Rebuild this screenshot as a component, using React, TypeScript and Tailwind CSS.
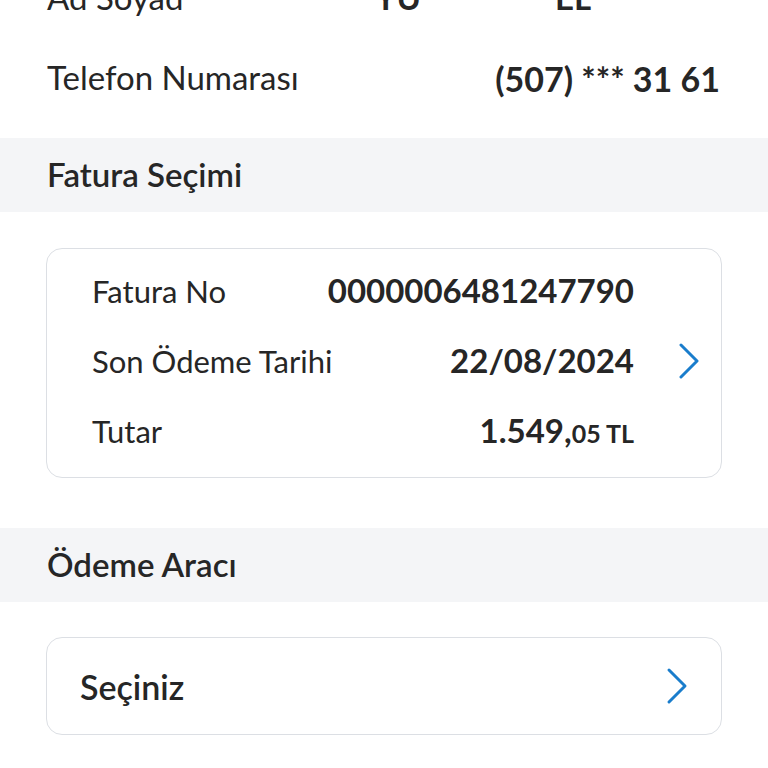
const font = { fontFamily: 'Lato, "Open Sans", sans-serif' }

function Chevron({ className }: { className?: string }) {
  return (
    <svg viewBox="0 0 22 36" className={className} fill="none">
      <path d="M3 2 L19 18 L3 34" stroke="#1a7dcc" strokeWidth="3" strokeLinecap="round" strokeLinejoin="round" />
    </svg>
  )
}

function InfoRow({ label, value }: { label: string; value: React.ReactNode }) {
  return (
    <div className="h-[70px] flex items-center justify-between">
      <span className="text-[33px] text-[#262626]">{label}</span>
      <span className="text-[34px] font-bold text-[#262626]">{value}</span>
    </div>
  )
}

function InvoiceRow({ label, value }: { label: string; value: React.ReactNode }) {
  return (
    <div className="h-[70px] flex items-center justify-between">
      <span className="text-[31px] text-[#262626]">{label}</span>
      <span className="text-[33px] font-bold text-[#262626]">{value}</span>
    </div>
  )
}

function SectionTitle({ children }: { children: React.ReactNode }) {
  return (
    <div className="h-[74px] bg-[#f4f5f7] flex items-center px-[47px]">
      <h2 className="text-[33px] font-semibold text-[#262626]">{children}</h2>
    </div>
  )
}

export default function App() {
  return (
    <div className="w-[768px] h-[768px] overflow-hidden bg-white" style={font}>
      {/* Customer info (list scrolled, first row partly hidden) */}
      <div className="-mt-[27px] pl-[47px] pr-[48px] pb-[25px]">
        <div className="h-[70px] pb-[20px] flex items-center">
          <span className="text-[33px] text-[#262626] w-[328px]">Ad Soyad</span>
          <span className="text-[33px] font-bold text-[#262626] w-[180px]">YU</span>
          <span className="text-[33px] font-bold text-[#262626]">EL</span>
        </div>
        <InfoRow label="Telefon Numarası" value="(507) *** 31 61" />
      </div>

      <SectionTitle>Fatura Seçimi</SectionTitle>

      <div className="px-[46px] pt-[36px] pb-[50px]">
        <div className="flex items-center border border-[#dcdfe4] rounded-[16px] pl-[45px] pt-[7px] pb-[11px]">
          <div className="flex-1">
            <InvoiceRow label="Fatura No" value="0000006481247790" />
            <InvoiceRow label="Son Ödeme Tarihi" value="22/08/2024" />
            <InvoiceRow
              label="Tutar"
              value={
                <>
                  1.549,<span className="text-[25px]">05 TL</span>
                </>
              }
            />
          </div>
          <Chevron className="ml-[44px] mr-[21px] w-[22px] h-[36px]" />
        </div>
      </div>

      <SectionTitle>Ödeme Aracı</SectionTitle>

      <div className="px-[46px] pt-[35px]">
        <div className="h-[98px] flex items-center justify-between border border-[#dcdfe4] rounded-[16px] pl-[33px] pr-[33px]">
          <span className="text-[34px] font-semibold text-[#262626]">Seçiniz</span>
          <Chevron className="w-[22px] h-[38px]" />
        </div>
      </div>
    </div>
  )
}
